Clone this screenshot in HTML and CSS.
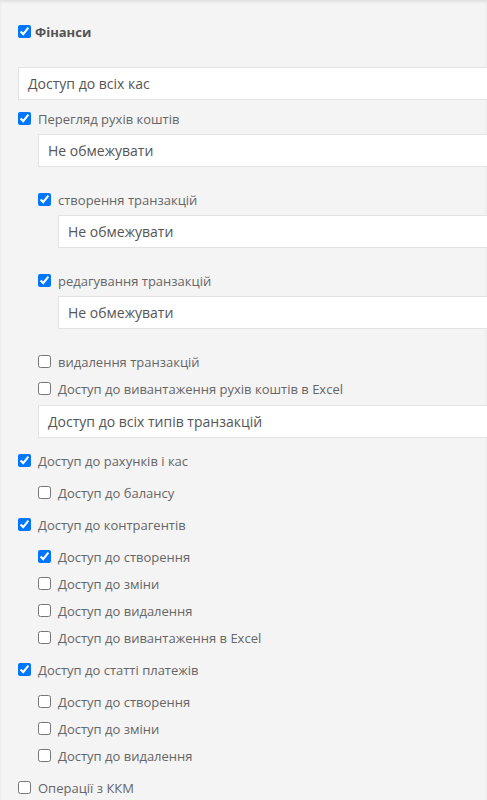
FILE: index.html
```html
<!DOCTYPE html>
<html lang="uk">
<head>
    <meta charset="UTF-8">
    <meta name="viewport" content="width=device-width, initial-scale=1.0">
    <title>Права доступу</title>
    <link rel="stylesheet" href="styles.css">
</head>
<body>
    <div class="page">
        <label class="row row-title"><input type="checkbox" checked><span>Фінанси</span></label>
        <div class="select select-first">Доступ до всіх кас</div>

        <label class="row row-after-select-top"><input type="checkbox" checked><span>Перегляд рухів коштів</span></label>
        <div class="group group-flat">
            <div class="select">Не обмежувати</div>

            <label class="row row-after-select"><input type="checkbox" checked><span>створення транзакцій</span></label>
            <div class="group group-flat">
                <div class="select">Не обмежувати</div>
            </div>

            <label class="row row-after-select"><input type="checkbox" checked><span>редагування транзакцій</span></label>
            <div class="group group-flat">
                <div class="select">Не обмежувати</div>
            </div>

            <label class="row row-after-select"><input type="checkbox"><span>видалення транзакцій</span></label>
            <label class="row"><input type="checkbox"><span>Доступ до вивантаження рухів коштів в Excel</span></label>
            <div class="select select-wide">Доступ до всіх типів транзакцій</div>
        </div>

        <label class="row row-after-last"><input type="checkbox" checked><span>Доступ до рахунків і кас</span></label>
        <div class="group">
            <label class="row"><input type="checkbox"><span>Доступ до балансу</span></label>
        </div>

        <label class="row"><input type="checkbox" checked><span>Доступ до контрагентів</span></label>
        <div class="group">
            <label class="row"><input type="checkbox" checked><span>Доступ до створення</span></label>
            <label class="row"><input type="checkbox"><span>Доступ до зміни</span></label>
            <label class="row"><input type="checkbox"><span>Доступ до видалення</span></label>
            <label class="row"><input type="checkbox"><span>Доступ до вивантаження в Excel</span></label>
        </div>

        <label class="row"><input type="checkbox" checked><span>Доступ до статті платежів</span></label>
        <div class="group">
            <label class="row"><input type="checkbox"><span>Доступ до створення</span></label>
            <label class="row"><input type="checkbox"><span>Доступ до зміни</span></label>
            <label class="row"><input type="checkbox"><span>Доступ до видалення</span></label>
        </div>

        <label class="row"><input type="checkbox"><span>Операції з ККМ</span></label>
    </div>
</body>
</html>
```

FILE: styles.css
```css
html, body {
    margin: 0;
    padding: 0;
    overflow: hidden;
}
body {
    font-family: "Open Sans", Arial, sans-serif;
    background-color: #f4f4f4;
    color: #666;
}
.page {
    min-height: 800px;
    padding: 18px 0 0 18px;
    box-shadow: inset 0 2px 3px rgba(0, 0, 0, 0.08);
    box-sizing: border-box;
    overflow: hidden;
}
.row {
    display: flex;
    align-items: center;
    height: 27px;
    font-size: 13px;
    white-space: nowrap;
}
.row input {
    width: 13px;
    height: 13px;
    margin: 0 7px 0 0;
    flex: none;
}
.row-title {
    font-weight: bold;
    color: #555;
}
.row-title input {
    margin-right: 4px;
}
.row-after-select-top {
    margin-top: 5px;
}
.row-after-select {
    margin-top: 19px;
}
.row-after-last {
    margin-top: 9px;
}
.group {
    margin-left: 20px;
    padding: 5px 0;
}
.group-flat {
    padding: 0;
}
.select {
    height: 33px;
    margin-top: 2px;
    margin-right: -1px;
    padding: 0 9px;
    box-sizing: border-box;
    display: flex;
    align-items: center;
    background-color: #fff;
    border: 1px solid #e3e3e3;
    font-size: 14px;
    color: #555;
    white-space: nowrap;
}
.select-first {
    margin-top: 22px;
}
.select-wide {
    margin-top: 3px;
}
```
